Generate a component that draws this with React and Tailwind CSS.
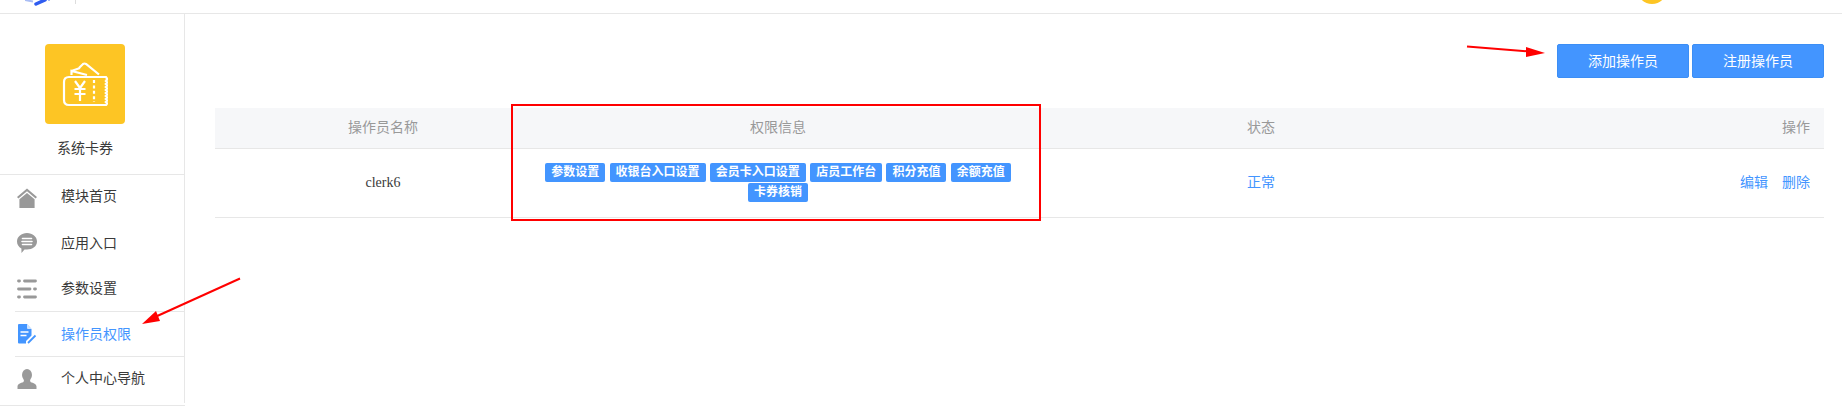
const Tags = ['参数设置', '收银台入口设置', '会员卡入口设置', '店员工作台', '积分充值', '余额充值', '卡券核销'];

const HomeIcon = () => (
  <svg width="20" height="20" viewBox="0 0 20 20" fill="#999">
    <path d="M10 0.5 L20 9 L18.6 10.4 L10 3.2 L1.4 10.4 L0 9 Z" />
    <path d="M10 5 L17.6 11.3 V20 H2.4 V11.3 Z" />
  </svg>
);
const ChatIcon = () => (
  <svg width="20" height="20" viewBox="0 0 20 20">
    <path fill="#999" d="M10 0 C15.5 0 20 3.6 20 8.5 C20 13.4 15.5 16.5 10 16.5 L7.5 16.5 L4.5 20 L4.4 15.4 C1.7 14 0 11.5 0 8.5 C0 3.6 4.5 0 10 0 Z" />
    <path stroke="#fff" strokeWidth="1.6" strokeLinecap="round" d="M5.5 5.5 H14.5 M5 8.5 H15 M5.5 11.5 H14.5" />
  </svg>
);
const ListIcon = () => (
  <svg width="20" height="20" viewBox="0 0 20 20" stroke="#999" strokeWidth="2.8" strokeLinecap="round" fill="none">
    <path d="M1.5 2 H2.5 M7.5 2 H18.5 M1.5 10 H13 M17.5 10 H18.5 M1.5 18 H2.5 M7.5 18 H18.5" />
  </svg>
);
const DocIcon = () => (
  <svg width="20" height="20" viewBox="0 0 20 20">
    <path fill="#4395ff" d="M2 0 H10 L14.5 5 V11.5 L9 17 V19.5 H2 Q1 19.5 1 18.5 V1 Q1 0 2 0 Z" />
    <path fill="#fff" d="M10 0 L14.5 5 H11 Q10 5 10 4 Z" opacity="0.75" />
    <path stroke="#fff" strokeWidth="1.5" d="M3.5 8 H11.5 M3.5 11.5 H9.5" />
    <path stroke="#4395ff" strokeWidth="1.8" d="M11 19 L18.5 11.5" />
  </svg>
);
const UserIcon = () => (
  <svg width="20" height="20" viewBox="0 0 20 20" fill="#999">
    <ellipse cx="10" cy="6" rx="5" ry="6" />
    <path d="M7 11 H13 L13.5 13 C16.5 14 19.5 15 19.5 17.5 V20 H0.5 V17.5 C0.5 15 3.5 14 6.5 13 Z" />
  </svg>
);
const TicketIcon = () => (
  <svg width="80" height="80" viewBox="0 0 80 80" fill="none" stroke="#fff" strokeWidth="2.2">
    <path d="M61 33 H24 Q19 33 19 38 V56 Q19 61 24 61 H61 Q63 59.5 61 58 Q63 56.5 61 55 Q63 53.5 61 52 Q63 50.5 61 49 Q63 47.5 61 46 Q63 44.5 61 43 Q63 41.5 61 40 Q63 38.5 61 37 Q63 35 61 33 Z" />
    <path d="M26.5 31 L26.5 27 L42 31 M26.5 27 L35 24" />
    <path d="M34 24 L38 20 Q39.5 19 41 20 L54 30.5" />
    <path d="M30 37 L35 44 L40 37 M29.5 45 H40.5 M29.5 50 H40.5 M35 44 V57" />
    <path d="M49 36 V58" strokeDasharray="3 2.4" />
  </svg>
);

const nav = [
  { label: '模块首页', icon: <HomeIcon />, cls: 'h-[45px]', text: '-mt-[2px]' },
  { label: '应用入口', icon: <ChatIcon />, cls: 'h-[46px]', text: '' },
  { label: '参数设置', icon: <ListIcon />, cls: 'h-[46px] border-b border-[#e7e7e7]', text: '' },
  { label: '操作员权限', icon: <DocIcon />, cls: 'h-[45px] border-b border-[#e7e7e7] text-[#4395ff]', text: '' },
  { label: '个人中心导航', icon: <UserIcon />, cls: 'h-[46px] pb-[2px]', text: '-mt-[2px]' },
];

export default function App() {
  return (
    <div className="relative w-[1842px] h-[420px] overflow-hidden bg-white text-[14px] text-[#3a3a3a] font-['Liberation_Serif','Noto_Sans_CJK_SC',serif]">
      <header className="flex items-start h-[14px] overflow-hidden border-b border-[#e7e7e7]">
        <svg className="ml-[25px]" width="26" height="6" viewBox="0 0 26 6" fill="none">
          <path d="M0 0 L8 1.5" stroke="#a9bdf5" strokeWidth="2" />
          <path d="M11 4 L20 0" stroke="#2f5cf0" strokeWidth="3.5" strokeLinecap="round" />
          <path d="M23 0 L25 0" stroke="#a9bdf5" strokeWidth="2" />
        </svg>
        <div className="ml-[24px] w-px h-[4px] bg-[#ddd]" />
        <div className="ml-auto mr-[175px] -mt-[26px] w-[30px] h-[30px] rounded-full bg-[#fdc524]" />
      </header>

      <div className="flex items-start">
        <aside className="w-[185px] shrink-0">
          <div className="border-r border-[#e7e7e7]">
            <div className="h-[161px] pt-[30px] pr-[14px] flex flex-col items-center border-b border-[#e7e7e7]">
              <div className="w-[80px] h-[80px] rounded-[4px] bg-[#fdc524]">
                <TicketIcon />
              </div>
              <div className="mt-[15px] leading-[20px]">系统卡券</div>
            </div>
            <nav className="pl-[15px]">
              {nav.map((n) => (
                <div key={n.label} className={`box-border flex items-center ${n.cls}`}>
                  <span className="ml-[2px] w-[20px] h-[20px] shrink-0">{n.icon}</span>
                  <span className={`ml-[24px] ${n.text}`}>{n.label}</span>
                </div>
              ))}
            </nav>
          </div>
          <div className="mt-[2px] h-px bg-[#e7e7e7]" />
        </aside>

        <main className="flex-1 pl-[30px] pr-[18px] pt-[30px]">
          <div className="flex justify-end gap-[3px]">
            <button className="w-[132px] h-[34px] rounded-[2px] border border-[#3c8ef5] bg-[#4395ff] text-white">添加操作员</button>
            <button className="w-[132px] h-[34px] rounded-[2px] border border-[#3c8ef5] bg-[#4395ff] text-white">注册操作员</button>
          </div>

          <div className="mt-[30px]">
            <div className="grid grid-cols-[336px_454px_512px_1fr] items-center h-[41px] bg-[#f6f7f9] border-b border-[#e7e7e7] text-[#999]">
              <div className="text-center -mt-[1px]">操作员名称</div>
              <div className="text-center -mt-[1px]">权限信息</div>
              <div className="text-center -mt-[1px]">状态</div>
              <div className="text-right pr-[14px] -mt-[1px]">操作</div>
            </div>
            <div className="grid grid-cols-[336px_454px_512px_1fr] items-center h-[69px] border-b border-[#e7e7e7]">
              <div className="text-center -mt-[1px]">clerk6</div>
              <div className="-mx-[20px] flex flex-wrap justify-center gap-x-[4.3px] gap-y-px -mt-[1px]">
                {Tags.map((t) => (
                  <span key={t} className="h-[19px] px-[6px] rounded-[2px] bg-[#4395ff] text-white text-[12px] font-bold leading-[19px]">{t}</span>
                ))}
              </div>
              <div className="text-center text-[#4395ff] -mt-[1px]">正常</div>
              <div className="flex justify-end gap-[14px] pr-[14px] text-[#4395ff] -mt-[1px]">
                <span>编辑</span>
                <span>删除</span>
              </div>
            </div>
          </div>
        </main>
      </div>

      <div className="absolute left-[511px] top-[104px] w-[530px] h-[117px] border-2 border-[#f00]" />
      <svg className="absolute left-0 top-0 pointer-events-none" width="1842" height="420" fill="#f00" stroke="#f00">
        <path d="M1467 46.5 L1530 51.5" strokeWidth="2" />
        <path d="M1526 47 L1545 53 L1526 57 Z" stroke="none" />
        <path d="M240 278.5 L155 317" strokeWidth="2" />
        <path d="M142 324 L156 311 L160 321 Z" stroke="none" />
      </svg>
    </div>
  );
}
